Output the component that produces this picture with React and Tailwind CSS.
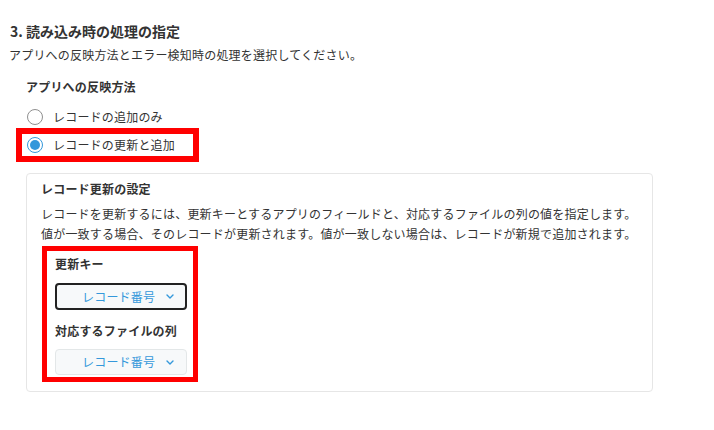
function Chevron() {
  return (
    <svg width="8" height="5" viewBox="0 0 8 5" fill="none" className="shrink-0">
      <path d="M1 1l3 3 3-3" stroke="#3498db" strokeWidth="1.4" strokeLinecap="round" strokeLinejoin="round" />
    </svg>
  )
}

function Radio({ checked }) {
  if (checked) {
    return (
      <span className="w-4 h-4 rounded-full border border-[#3498db] bg-white flex items-center justify-center shrink-0">
        <span className="w-[10px] h-[10px] rounded-full bg-[#3498db]" />
      </span>
    )
  }
  return <span className="w-4 h-4 rounded-full border border-[#8f8f8f] bg-white shrink-0" />
}

function Select({ focused }) {
  return (
    <div
      className={`w-[132px] flex items-center gap-[11px] rounded-[4px] bg-[#f7f9fa] ${
        focused ? 'h-[27px] border-2 border-[#222] pl-[25px]' : 'h-[26px] border border-[#e3e7e8] pl-[26px]'
      }`}
    >
      <span className="text-[12px] leading-[18px] text-[#3498db]">レコード番号</span>
      <Chevron />
    </div>
  )
}

export default function App() {
  return (
    <div className="w-[714px] h-[430px] bg-white pl-[10px] pt-[21px] text-[#333] tracking-[0.2px] font-['Noto_Sans_CJK_JP','Noto_Sans',sans-serif]">
      <h2 className="text-[14px] leading-[20px] font-bold tracking-normal">3. 読み込み時の処理の指定</h2>
      <p className="mt-[5px] -ml-px text-[12px] leading-[18px]">
        アプリへの反映方法とエラー検知時の処理を選択してください。
      </p>

      <h3 className="mt-[14px] ml-[16px] text-[12px] leading-[18px] font-bold">アプリへの反映方法</h3>

      <label className="mt-[11px] ml-[17px] h-5 flex items-center gap-[10px] text-[12px]">
        <Radio />
        <span>レコードの追加のみ</span>
      </label>

      <div className="mt-px ml-[6px] w-[183px] h-[34px] border-[6px] border-[#ff0000] flex items-center pl-[5px]">
        <label className="flex items-center gap-[10px] text-[12px]">
          <Radio checked />
          <span>レコードの更新と追加</span>
        </label>
      </div>

      <div className="mt-[11px] ml-[16px] w-[627px] h-[219px] border border-[#e6e6e6] rounded-[4px] pl-[14px] pt-[6px]">
        <h4 className="text-[12px] leading-[18px] font-bold">レコード更新の設定</h4>
        <p className="mt-[6px] text-[12px] leading-[20px]">
          レコードを更新するには、更新キーとするアプリのフィールドと、対応するファイルの列の値を指定します。
          <br />
          値が一致する場合、そのレコードが更新されます。値が一致しない場合は、レコードが新規で追加されます。
        </p>

        <div className="mt-[2px] ml-px w-[156px] h-[136px] border-[5px] border-[#ff0000] pl-[8px] pt-[4px]">
          <div className="text-[12px] leading-[18px] font-bold">更新キー</div>
          <div className="mt-[10px]">
            <Select focused />
          </div>
          <div className="mt-[12px] text-[12px] leading-[18px] font-bold">対応するファイルの列</div>
          <div className="mt-[9px]">
            <Select />
          </div>
        </div>
      </div>
    </div>
  )
}
